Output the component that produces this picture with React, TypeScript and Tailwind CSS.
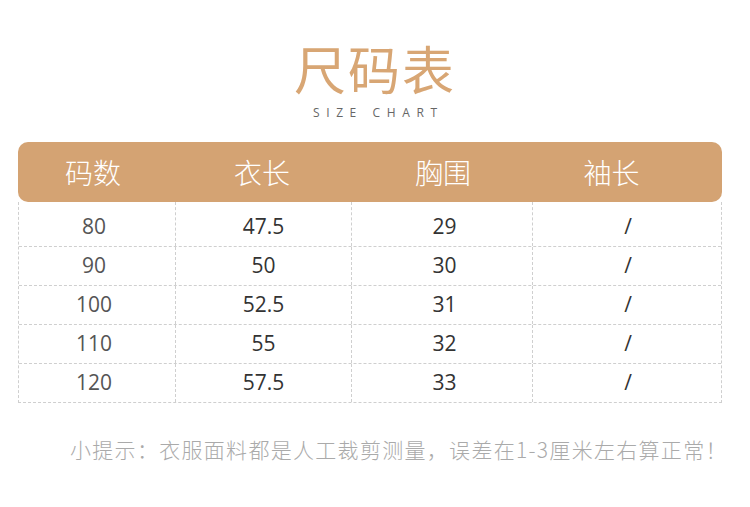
const HEADERS = ['码数', '衣长', '胸围', '袖长'];

const ROWS = [
  ['80', '47.5', '29', '/'],
  ['90', '50', '30', '/'],
  ['100', '52.5', '31', '/'],
  ['110', '55', '32', '/'],
  ['120', '57.5', '33', '/'],
];

const COLS = 'grid grid-cols-[156px_176px_181px_191px]';
const CJK = "font-['Noto_Sans_CJK_SC',sans-serif]";

export default function App() {
  return (
    <div className={`w-[750px] h-[507px] bg-white overflow-hidden ${CJK}`}>
      {/* Title */}
      <div className="flex flex-col items-center pt-[36px]">
        <h1 className="text-[52px] leading-[64px] tracking-[2px] text-[#d8a674] font-normal">
          尺码表
        </h1>
        <p className="mt-[6px] text-[12px] leading-[14px] tracking-[0.55em] pl-[0.55em] text-[#666] font-['Open_Sans',sans-serif]">
          SIZE CHART
        </p>
      </div>

      {/* Table */}
      <div className="mx-[18px] mt-[22px] w-[704px]">
        <div className={`${COLS} h-[60px] bg-[#d4a373] rounded-[10px] text-white text-[28px] font-light`}>
          {HEADERS.map((h, i) => (
            <div
              key={h}
              className={`flex items-center justify-center ${
                i === 0 ? 'pr-[6px]' : i === 2 ? 'pl-[5px]' : i === 3 ? 'pr-[30px]' : ''
              }`}
            >
              {h}
            </div>
          ))}
        </div>
        <div className="border-l border-r border-b border-dashed border-[#cfcfcf] font-['Open_Sans',sans-serif] text-[21px]">
          {ROWS.map((row, r) => (
            <div
              key={row[0]}
              className={`${COLS} ${r === 0 ? 'h-[44px]' : 'h-[39px] border-t border-dashed border-[#cfcfcf]'}`}
            >
              {row.map((cell, c) => (
                <div
                  key={c}
                  className={`flex items-center justify-center ${r === 0 ? 'pt-[6px]' : ''} ${
                    c > 0 ? 'border-l border-dashed border-[#cfcfcf]' : ''
                  } ${c === 0 ? 'pr-[6px] text-[#555]' : 'text-[#333]'} ${c === 2 ? 'pl-[5px]' : ''}`}
                >
                  {cell}
                </div>
              ))}
            </div>
          ))}
        </div>
      </div>

      {/* Note */}
      <p className="mt-[32px] ml-[70px] text-[21px] leading-[28px] tracking-[1.3px] text-[#aaa] font-light whitespace-nowrap">
        小提示：衣服面料都是人工裁剪测量，误差在1-3厘米左右算正常！
      </p>
    </div>
  );
}
